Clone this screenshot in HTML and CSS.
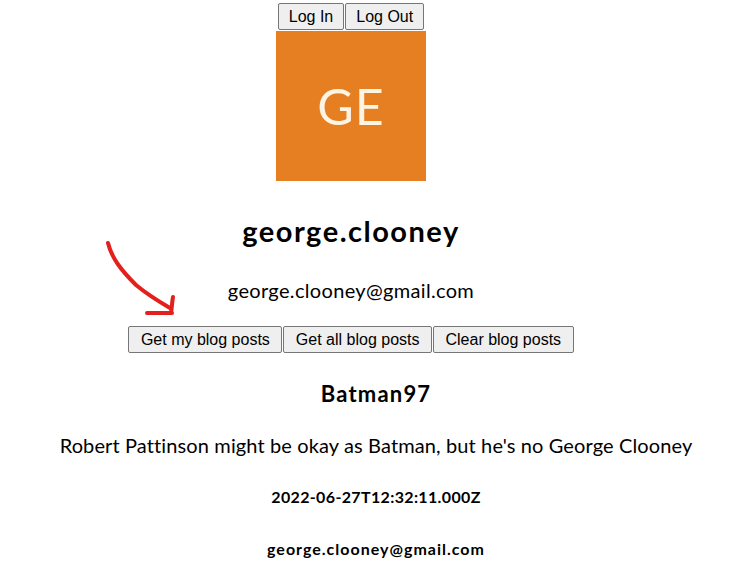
FILE: index.html
```html
<!DOCTYPE html>
<html lang="en">
<head>
<meta charset="utf-8">
<title>Blog</title>
<link rel="stylesheet" href="styles.css">
</head>
<body>
<div class="app">
  <section class="profile">
    <div class="auth-buttons">
      <button class="btn">Log In</button><button class="btn">Log Out</button>
    </div>
    <div class="avatar">GE</div>
    <h2 class="name">george.clooney</h2>
    <p class="email">george.clooney@gmail.com</p>
    <div class="post-buttons">
      <button class="btn btn-wide">Get my blog posts</button><button class="btn btn-wide">Get all blog posts</button><button class="btn btn-wide">Clear blog posts</button>
    </div>
  </section>
  <section class="posts">
    <article class="post">
      <h3 class="post-title">Batman97</h3>
      <p class="post-body">Robert Pattinson might be okay as Batman, but he's no George Clooney</p>
      <h4 class="post-date">2022-06-27T12:32:11.000Z</h4>
      <h4 class="post-author">george.clooney@gmail.com</h4>
    </article>
  </section>
  <svg class="arrow" width="90" height="90" viewBox="0 0 90 90" aria-hidden="true">
    <path d="M8 8 C 12 24, 22 36, 36 50 C 48 60, 58 66, 70 73" fill="none" stroke="#e3201b" stroke-width="4" stroke-linecap="round"/>
    <path d="M73 62 C 72 67, 72 72, 71 78 M 47 78 C 56 78, 64 78, 72 78" fill="none" stroke="#e3201b" stroke-width="4" stroke-linecap="round"/>
  </svg>
</div>
</body>
</html>
```
FILE: styles.css
```css
html, body {
  margin: 0;
  padding: 0;
  background: #ffffff;
}
body {
  font-family: Lato, "Open Sans", sans-serif;
  color: #000;
}
.app {
  position: relative;
  padding-top: 3px;
}
.profile {
  display: flex;
  flex-direction: column;
  align-items: center;
  padding-right: 44px;
}
.auth-buttons, .post-buttons {
  display: flex;
  gap: 1px;
}
.btn {
  font-family: "Liberation Sans", Arial, sans-serif;
  font-size: 16px;
  height: 27px;
  padding: 0 10px;
  margin: 0;
  background: #efefef;
  border: 1px solid #767676;
  border-radius: 2px;
  color: #000;
}
.btn-wide {
  padding: 0 11.5px;
}
.avatar {
  margin-top: 1px;
  width: 150px;
  height: 150px;
  background: #e67e22;
  color: #fdf4e4;
  font-family: Lato, sans-serif;
  font-weight: 400;
  font-size: 50px;
  letter-spacing: 1px;
  display: flex;
  align-items: center;
  justify-content: center;
}
.name {
  margin: 33px 0 0;
  font-size: 29px;
  line-height: 34px;
  font-weight: 700;
  letter-spacing: 1.5px;
}
.email {
  margin: 30px 0 0;
  font-size: 20px;
  line-height: 24px;
  letter-spacing: 0.33px;
}
.post-buttons {
  margin-top: 24px;
}
.posts {
  display: flex;
  flex-direction: column;
  align-items: center;
  padding-left: 6px;
}
.post {
  display: flex;
  flex-direction: column;
  align-items: center;
}
.post-title {
  margin: 27px 0 0;
  font-size: 22px;
  line-height: 28px;
  font-weight: 700;
  letter-spacing: 1.2px;
}
.post-body {
  margin: 25px 0 0;
  font-size: 20px;
  line-height: 24px;
  letter-spacing: 0.12px;
}
.post-date {
  margin: 30px 0 0;
  font-size: 16px;
  line-height: 20px;
  font-weight: 700;
  letter-spacing: 0.35px;
}
.post-author {
  margin: 32px 0 0;
  font-size: 16px;
  line-height: 20px;
  font-weight: 700;
  letter-spacing: 1px;
}
.arrow {
  position: absolute;
  left: 100px;
  top: 235px;
}
```
